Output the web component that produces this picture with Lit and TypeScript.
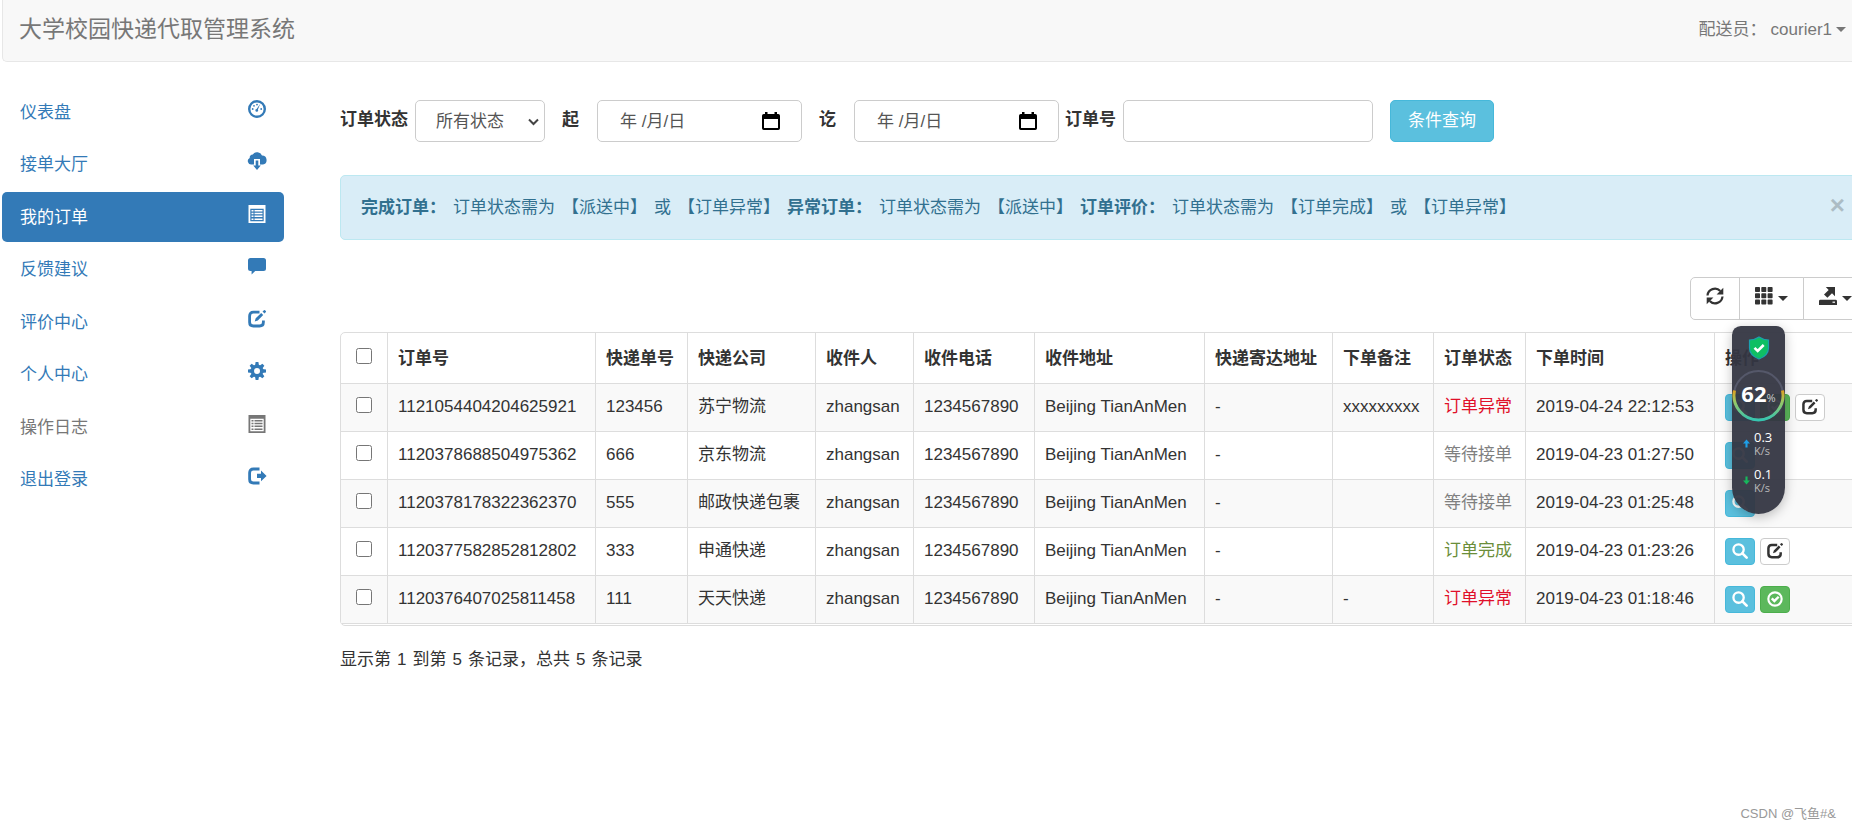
import { LitElement, html, svg, css, nothing } from "lit";
import { customElement, property, state } from "lit/decorators.js";
import { classMap } from "lit/directives/class-map.js";

const gearTeeth = [0, 45, 90, 135, 180, 225, 270, 315];
const cells = [0, 1, 2];

const edit = svg`
  <path d="M11.500 2.200H5.400Q1.600 2.200 1.600 6v6.200Q1.600 16 5.400 16h6.200q3.800 0 3.800-3.800V10.500" fill="none" stroke="currentColor" stroke-width="2.800"/>
  <path d="M13.200 2.900l2 2-5.400 5.600-3.100 1 1-3.200zM14.500 1.500L16 .2q.5-.3 1 .1l.8.800q.4.500.1 1L16.500 3.500z" fill="currentColor"/>`;

const icons: Record<string, unknown> = {
  dashboard: svg`
    <circle cx="9" cy="9" r="7.800" fill="none" stroke="currentColor" stroke-width="2.400"/>
    <path d="M12.300 3.800L9.900 9.600a1.400 1.400 0 1 1-1.300-.6z" fill="currentColor"/>
    <circle cx="4.700" cy="9" r=".9" fill="currentColor"/><circle cx="6" cy="5.800" r=".9" fill="currentColor"/>
    <circle cx="9" cy="4.600" r=".9" fill="currentColor"/><circle cx="13.200" cy="9" r=".9" fill="currentColor"/>`,
  cloud: svg`
    <path d="M6 12.500H3.600A3.500 3.500 0 0 1 1.700 5.900 3.300 3.300 0 0 1 4.800 2.500 5.200 5.200 0 0 1 14 3.600a4.500 4.500 0 0 1 1 8.900H12V7H6z" fill="currentColor"/>
    <path d="M7.700 8.500h2.600v5h2.500L9 18l-3.800-4.500h2.500z" fill="currentColor"/>`,
  list: svg`
    <path fill-rule="evenodd" d="M.5 0h17v18H.500zM2.300 3.800v12.400h13.400V3.800z" fill="currentColor"/>
    <path d="M3.500 5h2v1.500h-2zM6.500 5h8v1.500h-8zM3.500 7.800h2v1.500h-2zM6.500 7.800h8v1.500h-8zM3.500 10.600h2v1.500h-2zM6.500 10.600h8v1.500h-8zM3.500 13.400h2v1.500h-2zM6.500 13.400h8v1.500h-8z" fill="currentColor"/>`,
  comment: svg`<path d="M2.500 1h13Q18 1 18 3.500v8q0 2.500-2.500 2.500H7.200L3.600 17.600V14H2.500Q0 14 0 11.500v-8Q0 1 2.500 1z" fill="currentColor"/>`,
  edit,
  cog: svg`
    ${gearTeeth.map((a) => svg`<path d="M7.600 0h2.800l.6 4H7z" fill="currentColor" transform="rotate(${a} 9 9)"/>`)}
    <circle cx="9" cy="9" r="4.700" fill="none" stroke="currentColor" stroke-width="3.400"/>`,
  logout: svg`
    <path d="M11.500 2H5.400Q1.600 2 1.600 5.800v6.400Q1.600 16 5.400 16h6.100" fill="none" stroke="currentColor" stroke-width="2.800"/>
    <path d="M9 6.700h4V3.500L18.600 9 13 14.300v-3.200H9z" fill="currentColor"/>`,
  refresh: svg`
    <path d="M1.500 8.500A7.400 7.400 0 0 1 14.300 4.100M16.500 9.500A7.400 7.400 0 0 1 3.700 13.900" fill="none" stroke="currentColor" stroke-width="2.200"/>
    <path d="M17.300.8v6.700h-6.700zM.7 17.200v-6.700h6.700z" fill="currentColor"/>`,
  grid: svg`${cells.map((r) => cells.map((c) => svg`<rect x=${c * 6.3} y=${r * 6.3} width="5" height="5" rx=".8" fill="currentColor"/>`))}`,
  export: svg`
    <path d="M6.800 0h9.200v9.200l-3-3-4.600 4.600-3.400-3.400 4.700-4.500zM0 14.200q0-1.400 1.400-1.400h15.200q1.400 0 1.400 1.400V18H0z" fill="currentColor"/>
    <path d="M13.500 14.600h2.500v1.200h-2.500z" fill="#fff"/>`,
  search: svg`
    <circle cx="7.400" cy="7.400" r="5.800" fill="none" stroke="currentColor" stroke-width="2.600"/>
    <path d="M11.700 11.700l4.800 4.800" stroke="currentColor" stroke-width="3" stroke-linecap="round"/>`,
  check: svg`
    <circle cx="9" cy="9" r="7.500" fill="none" stroke="currentColor" stroke-width="2.400"/>
    <path d="M4.400 9.300l1.900-1.900 2 2 3.900-3.900 1.900 1.900-5.800 5.800z" fill="currentColor"/>`,
  calendar: svg`<path fill-rule="evenodd" d="M3 0h2.500v2h7V0H15v2h1.200Q18 2 18 3.800v12.400Q18 18 16.200 18H1.800Q0 18 0 16.200V3.800Q0 2 1.800 2H3zM2 7v9h14V7z" fill="currentColor"/>`,
};

@customElement("app-icon")
export class AppIcon extends LitElement {
  static styles = css`
    :host { display: inline-flex; width: 18px; height: 18px; flex: none; }
    svg { width: 100%; height: 100%; overflow: visible; }
  `;
  @property() name = "";
  render() {
    return html`<svg viewBox="0 0 18 18" aria-hidden="true">${icons[this.name]}</svg>`;
  }
}

interface Order {
  id: string;
  tracking: string;
  company: string;
  note: string;
  status: string;
  tone: string;
  time: string;
  actions: string[];
}

const orders: Order[] = [
  { id: "1121054404204625921", tracking: "123456", company: "苏宁物流", note: "xxxxxxxxx", status: "订单异常", tone: "bad", time: "2019-04-24 22:12:53", actions: ["search", "check", "edit"] },
  { id: "1120378688504975362", tracking: "666", company: "京东物流", note: "", status: "等待接单", tone: "wait", time: "2019-04-23 01:27:50", actions: ["search"] },
  { id: "1120378178322362370", tracking: "555", company: "邮政快递包裹", note: "", status: "等待接单", tone: "wait", time: "2019-04-23 01:25:48", actions: ["search"] },
  { id: "1120377582852812802", tracking: "333", company: "申通快递", note: "", status: "订单完成", tone: "done", time: "2019-04-23 01:23:26", actions: ["search", "edit"] },
  { id: "1120376407025811458", tracking: "111", company: "天天快递", note: "-", status: "订单异常", tone: "bad", time: "2019-04-23 01:18:46", actions: ["search", "check"] },
];

const menu = [
  { text: "仪表盘", icon: "dashboard" },
  { text: "接单大厅", icon: "cloud" },
  { text: "我的订单", icon: "list", active: true },
  { text: "反馈建议", icon: "comment" },
  { text: "评价中心", icon: "edit" },
  { text: "个人中心", icon: "cog" },
  { text: "操作日志", icon: "list", muted: true },
  { text: "退出登录", icon: "logout" },
];

const columns = ["订单号", "快递单号", "快递公司", "收件人", "收件电话", "收件地址", "快递寄达地址", "下单备注", "订单状态", "下单时间", "操作"];
const columnClasses = ["c-id", "c-short", "c-company", "c-name", "c-phone", "c-address", "c-dest", "c-note", "c-short", "c-time", "c-ops"];
const actionLabels: Record<string, string> = { search: "查看", check: "完成", edit: "评价" };

@customElement("app-root")
export class AppRoot extends LitElement {
  static styles = css`
    :host {
      display: block;
      position: relative;
      min-height: 100vh;
      overflow: hidden;
      background: #fff;
      color: #333;
      font: 17px/25px "Liberation Sans", "Noto Sans CJK SC", sans-serif;
    }
    * { box-sizing: border-box; }
    button, input, select { font: inherit; color: inherit; margin: 0; }
    button { cursor: pointer; }
    a { text-decoration: none; color: inherit; }

    .navbar {
      display: flex;
      justify-content: space-between;
      align-items: center;
      height: 62px;
      margin-left: 2px;
      padding: 0 6px 3px 16px;
      background: #f8f8f8;
      border: solid #e7e7e7;
      border-width: 0 0 1px 1px;
      border-bottom-left-radius: 5px;
      color: #777;
    }
    .brand { font-size: 23px; }
    .user { display: flex; align-items: center; gap: 4px; }
    .caret {
      border: 5px solid transparent;
      border-top-color: currentColor;
      border-bottom: 0;
    }

    .layout { display: flex; align-items: flex-start; }
    .side {
      flex: none;
      width: 282px;
      margin: 25px 56px 0 2px;
      padding: 0;
      list-style: none;
      color: #337ab7;
    }
    .side li { margin-bottom: 3px; }
    .side li:nth-child(odd) { margin-bottom: 2px; }
    .side a {
      display: flex;
      justify-content: space-between;
      padding: 13px 18px 12px;
      border-radius: 5px;
    }
    .side .active { background: #337ab7; color: #fff; }
    .side .muted { color: #777; }

    main { flex: 1; min-width: 0; margin-right: -16px; }

    .filters { display: flex; align-items: flex-start; margin-top: 38px; }
    .filters label { font-weight: 700; line-height: 40px; margin-right: 7px; white-space: nowrap; }
    .filters .spaced { margin: 0 18px 0 17px; }
    .control {
      height: 42px;
      border: 1px solid #ccc;
      border-radius: 5px;
      background: #fff;
      color: #555;
      padding: 0 20px;
      outline: none;
    }
    .select { position: relative; display: flex; }
    .select select { appearance: none; width: 130px; }
    .select svg { position: absolute; right: 6px; top: 18px; width: 11px; height: 8px; pointer-events: none; }
    .date {
      display: flex;
      align-items: center;
      width: 205px;
      padding: 0 21px 0 22px;
    }
    .date input { flex: 1; min-width: 0; border: 0; padding: 0; background: none; outline: none; }
    .date input::placeholder { color: #555; opacity: 1; }
    .date button { display: flex; padding: 0; border: 0; background: none; color: #000; }
    .date + label:not(.spaced) { margin-left: 6px; }
    .order-no { width: 250px; }
    .query {
      height: 42px;
      margin-left: 17px;
      padding: 0 17px 2px;
      border: 1px solid #46b8da;
      border-radius: 5px;
      background: #5bc0de;
      color: #fff;
      white-space: nowrap;
    }

    .alert {
      display: flex;
      column-gap: 7px;
      margin-top: 33px;
      padding: 19px 22px 19px 20px;
      border: 1px solid #bce8f1;
      border-radius: 5px;
      background: #d9edf7;
      color: #31708f;
      white-space: nowrap;
    }
    .alert button {
      align-self: flex-start;
      margin-left: auto;
      padding: 0;
      border: 0;
      background: none;
      color: #000;
      opacity: 0.2;
      font-size: 26px;
      font-weight: 700;
      line-height: 20px;
    }

    .toolbar { display: flex; justify-content: flex-end; margin-top: 37px; }
    .toolbar button {
      display: flex;
      align-items: center;
      gap: 5px;
      height: 43px;
      margin-left: -1px;
      padding: 0 15px 6px;
      border: 1px solid #ccc;
      background: #fff;
    }
    .toolbar button:first-child { border-radius: 5px 0 0 5px; }
    .toolbar button:last-child { border-radius: 0 5px 5px 0; }
    .toolbar .caret { margin-top: 6px; }

    .table-box {
      margin-top: 12px;
      padding-bottom: 1px;
      border: 1px solid #ddd;
      border-radius: 5px;
      overflow: hidden;
    }
    table { width: 100%; table-layout: fixed; border-collapse: separate; border-spacing: 0; }
    th, td {
      height: 48px;
      padding: 0 10px 3px;
      border-bottom: 1px solid #ddd;
      border-left: 1px solid #ddd;
      text-align: left;
      white-space: nowrap;
    }
    th { height: 51px; padding-bottom: 0; }
    th:first-child, td:first-child { border-left: 0; padding: 0; text-align: center; }
    tbody tr:nth-child(odd) { background: #f9f9f9; }
    .c-check { width: 46px; }
    .c-id { width: 208px; }
    .c-short { width: 92px; }
    .c-company { width: 128px; }
    .c-name { width: 98px; }
    .c-phone { width: 121px; }
    .c-address { width: 170px; }
    .c-dest { width: 128px; }
    .c-note { width: 101px; }
    .c-time { width: 189px; }
    input[type="checkbox"] { display: block; width: 16px; height: 16px; margin: 0 auto 5px; }
    .bad { color: #e0102a; }
    .wait { color: #808080; }
    .done { color: #6b8e3a; }
    .ops { display: flex; gap: 5px; padding-top: 3px; }
    .ops button {
      display: flex;
      align-items: center;
      justify-content: center;
      width: 30px;
      height: 27px;
      padding: 0 0 1px;
      border: 1px solid #46b8da;
      border-radius: 4px;
      background: #5bc0de;
      color: #fff;
    }
    .ops app-icon { width: 16px; height: 16px; }
    .ops .check { background: #5cb85c; border-color: #4cae4c; }
    .ops .edit { background: #fff; border-color: #ccc; color: #333; }

    .summary { display: flex; gap: 6px; margin: 21px 0; }

    .monitor {
      position: absolute;
      top: 326px;
      right: 67px;
      width: 53px;
      height: 188px;
      display: flex;
      flex-direction: column;
      align-items: center;
      padding-top: 10px;
      border-radius: 9px 9px 27px 27px;
      background: rgba(52, 54, 66, 0.95);
      box-shadow: 0 3px 12px rgba(0, 0, 0, 0.25);
      color: #fff;
      font-family: "Open Sans", sans-serif;
    }
    .shield { width: 22px; height: 24px; }
    .gauge {
      display: grid;
      place-items: center;
      width: 53px;
      height: 52px;
      margin: 9px 0 4px;
    }
    .gauge > * { grid-area: 1 / 1; }
    .gauge svg { width: 53px; height: 53px; }
    .gauge b { font-size: 22px; line-height: 24px; }
    .gauge small { font-size: 11px; font-weight: 400; color: #ccc; }
    .rate { display: grid; grid-template-columns: 8px 20px; align-items: center; column-gap: 3px; height: 37px; }
    .rate span { font-size: 13px; line-height: 14px; }
    .rate small { display: block; font-size: 11px; line-height: 14px; color: #bbb; }
    .rate svg { width: 7px; height: 9px; }

    .mark { position: absolute; right: 16px; bottom: 3px; font-size: 13px; color: #999; }
  `;

  @state() private alertOpen = true;

  private dateField(id: string) {
    return html`<div class="control date">
      <input id=${id} type="text" placeholder="年 /月/日" />
      <button type="button" aria-label="选择日期"><app-icon name="calendar"></app-icon></button>
    </div>`;
  }

  render() {
    return html`
      <header class="navbar">
        <a class="brand" href="#">大学校园快递代取管理系统</a>
        <a class="user" href="#"><span>配送员：</span><span>courier1</span><i class="caret"></i></a>
      </header>
      <div class="layout">
        <ul class="side">
          ${menu.map((m) => html`<li>
            <a href="#" class=${classMap({ active: !!m.active, muted: !!m.muted })}><span>${m.text}</span><app-icon name=${m.icon}></app-icon></a>
          </li>`)}
        </ul>
        <main>
          <form class="filters">
            <label for="status">订单状态</label>
            <div class="select">
              <select id="status" class="control"><option>所有状态</option></select>
              <svg viewBox="0 0 11 8"><path d="M1 1.500l4.500 4.500L10 1.500" fill="none" stroke="#444" stroke-width="2"/></svg>
            </div>
            <label class="spaced" for="from">起</label>
            ${this.dateField("from")}
            <label class="spaced" for="to">讫</label>
            ${this.dateField("to")}
            <label for="order">订单号</label>
            <input id="order" class="control order-no" type="text" />
            <button class="query" type="button">条件查询</button>
          </form>

          ${this.alertOpen ? html`<div class="alert" role="alert">
            <strong>完成订单：</strong><span>订单状态需为</span><span>【派送中】</span><span>或</span><span>【订单异常】</span>
            <strong>异常订单：</strong><span>订单状态需为</span><span>【派送中】</span>
            <strong>订单评价：</strong><span>订单状态需为</span><span>【订单完成】</span><span>或</span><span>【订单异常】</span>
            <button type="button" aria-label="关闭" @click=${() => (this.alertOpen = false)}>×</button>
          </div>` : nothing}

          <div class="toolbar">
            <button type="button" aria-label="刷新"><app-icon name="refresh"></app-icon></button>
            <button type="button" aria-label="列"><app-icon name="grid"></app-icon><i class="caret"></i></button>
            <button type="button" aria-label="导出数据"><app-icon name="export"></app-icon><i class="caret"></i></button>
          </div>

          <div class="table-box">
            <table>
              <colgroup><col class="c-check" />${columnClasses.map((c) => html`<col class=${c} />`)}</colgroup>
              <thead>
                <tr><th><input type="checkbox" aria-label="全选" /></th>${columns.map((c) => html`<th>${c}</th>`)}</tr>
              </thead>
              <tbody>
                ${orders.map((o) => html`<tr>
                  <td><input type="checkbox" aria-label=${o.id} /></td>
                  <td>${o.id}</td>
                  <td>${o.tracking}</td>
                  <td>${o.company}</td>
                  <td>zhangsan</td>
                  <td>1234567890</td>
                  <td>Beijing TianAnMen</td>
                  <td>-</td>
                  <td>${o.note}</td>
                  <td class=${o.tone}>${o.status}</td>
                  <td>${o.time}</td>
                  <td><div class="ops">${o.actions.map((a) => html`<button type="button" class=${a} aria-label=${actionLabels[a]}><app-icon name=${a}></app-icon></button>`)}</div></td>
                </tr>`)}
              </tbody>
            </table>
          </div>
          <div class="summary">
            <span>显示第</span><span>1</span><span>到第</span><span>5</span><span>条记录，总共</span><span>5</span><span>条记录</span>
          </div>
        </main>
      </div>

      <aside class="monitor">
        <svg class="shield" viewBox="0 0 22 24">
          <path d="M11 1q4.500 3 9.500 3v8q0 7.500-9.500 11Q1.500 19.500 1.500 12V4q5 0 9.500-3z" fill="#0fbf63" stroke="#1c9fb0" stroke-width="1.200"/>
          <path d="M6.500 11.800l3.200 3.200 6-6" fill="none" stroke="#fff" stroke-width="2.600"/>
        </svg>
        <div class="gauge">
          <svg viewBox="0 0 53 53">
            <defs><linearGradient id="ring" x1="0" y1="0" x2="0" y2="1"><stop offset="0" stop-color="#e0a020"/><stop offset=".35" stop-color="#9fc860"/><stop offset="1" stop-color="#35c5b0"/></linearGradient></defs>
            <circle cx="26.500" cy="26.500" r="24.500" fill="none" stroke="#55586a" stroke-width="2"/>
            <path d="M2.500 21.500a24.500 24.500 0 1 0 48 0" fill="none" stroke="url(#ring)" stroke-width="3"/>
          </svg>
          <b>62<small>%</small></b>
        </div>
        <div class="rate">
          <svg viewBox="0 0 8 9"><path d="M4 0l4 4.500H5.200V9H2.800V4.500H0z" fill="#1e9fe8"/></svg>
          <span>0.3<small>K/s</small></span>
        </div>
        <div class="rate">
          <svg viewBox="0 0 8 9"><path d="M4 9l4-4.500H5.200V0H2.800v4.500H0z" fill="#17b85c"/></svg>
          <span>0.1<small>K/s</small></span>
        </div>
      </aside>
      <div class="mark">CSDN @飞鱼#&amp;</div>
    `;
  }
}
